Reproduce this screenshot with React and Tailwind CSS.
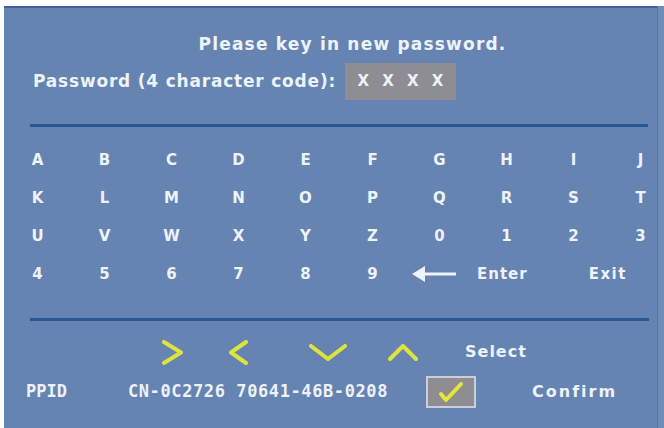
import React from "react";

const keyRows = [
    ["A", "B", "C", "D", "E", "F", "G", "H", "I", "J"],
    ["K", "L", "M", "N", "O", "P", "Q", "R", "S", "T"],
    ["U", "V", "W", "X", "Y", "Z", "0", "1", "2", "3"],
];
const lastRow = ["4", "5", "6", "7", "8", "9"];

const osdFont = { fontFamily: '"DejaVu Sans", Verdana, sans-serif' };
const monoFont = { fontFamily: '"DejaVu Sans Mono", "Liberation Mono", monospace' };

function Chevron({ points, w, h }) {
    return (
        <svg width={w} height={h} viewBox={`0 0 ${w} ${h}`}>
            <polyline points={points} fill="none" stroke="#dfe33e" strokeWidth="4" strokeLinecap="round" strokeLinejoin="round" />
        </svg>
    );
}

function BackArrow() {
    return (
        <svg width="44" height="18" viewBox="0 0 44 18">
            <polygon points="0,9 13,1 13,17" fill="#eef2fa" />
            <rect x="12" y="7.5" width="32" height="3" fill="#eef2fa" />
        </svg>
    );
}

function KeyCell({ children }) {
    return (
        <div className="h-[38px] flex items-center justify-center text-[15px] font-bold text-[#eef2fa]">
            {children}
        </div>
    );
}

export default function App() {
    return (
        <div className="w-[664px] h-[428px] bg-white pt-[6px] pl-[4px] overflow-hidden flex" style={osdFont}>
            <div className="flex-1 h-full bg-[#6584b1] border-t-2 border-[#40629a] flex flex-col text-[#eef2fa] overflow-hidden">
                {/* heading */}
                <div className="mt-[27px] h-[20px] pl-[44px] flex items-center justify-center text-[17px] font-bold tracking-[1.2px]">
                    Please key in new password.
                </div>

                {/* password entry */}
                <div className="mt-[8px] flex items-center h-[37px]">
                    <div className="ml-[29px] w-[312px] text-[17px] font-bold tracking-[0.8px]">
                        Password (4 character code):
                    </div>
                    <div className="w-[111px] h-[37px] bg-[#8d8d93] flex items-center justify-around px-[6px] text-[15px] font-bold">
                        <span>X</span>
                        <span>X</span>
                        <span>X</span>
                        <span>X</span>
                    </div>
                </div>

                <div className="mt-[24px] ml-[26px] w-[618px] h-[3px] bg-[#2a5796]" />

                {/* keyboard */}
                <div className="mt-[14px] grid grid-cols-[repeat(10,67px)]">
                    {keyRows.map((row) =>
                        row.map((k) => <KeyCell key={k}>{k}</KeyCell>)
                    )}
                    {lastRow.map((k) => (
                        <KeyCell key={k}>{k}</KeyCell>
                    ))}
                    <div className="col-span-4 h-[38px] flex items-center">
                        <div className="ml-[6px]">
                            <BackArrow />
                        </div>
                        <span className="ml-[21px] text-[15px] font-bold tracking-[1px]">Enter</span>
                        <span className="ml-[61px] text-[15px] font-bold tracking-[1.5px]">Exit</span>
                    </div>
                </div>

                <div className="mt-[25px] ml-[26px] w-[619px] h-[3px] bg-[#2a5796]" />

                {/* navigation hints */}
                <div className="mt-[16px] h-[30px] flex items-center">
                    <div className="ml-[158px]">
                        <Chevron w={21} h={25} points="2,2 19,12.5 2,23" />
                    </div>
                    <div className="ml-[46px]">
                        <Chevron w={19} h={25} points="17,2 2,12.5 17,23" />
                    </div>
                    <div className="ml-[61px]">
                        <Chevron w={38} h={17} points="2,2 19,15 36,2" />
                    </div>
                    <div className="ml-[41px]">
                        <Chevron w={30} h={17} points="2,15 15,2 28,15" />
                    </div>
                    <span className="ml-[47px] text-[16px] font-bold tracking-[1px]">Select</span>
                </div>

                {/* footer */}
                <div className="mt-[9px] h-[32px] flex items-center">
                    <span className="ml-[22px] text-[17px] font-bold" style={monoFont}>PPID</span>
                    <span className="ml-[61px] text-[17px] font-bold tracking-[0.6px]" style={monoFont}>
                        CN-0C2726 70641-46B-0208
                    </span>
                    <div className="ml-[38px] w-[50px] h-[32px] bg-[#8e8d92] border-2 border-[#c9cfdb] flex items-center justify-center">
                        <svg width="26" height="22" viewBox="0 0 26 22">
                            <polyline points="3,13 8,19 23,3" fill="none" stroke="#e4e63a" strokeWidth="4" strokeLinecap="round" strokeLinejoin="round" />
                        </svg>
                    </div>
                    <span className="ml-[56px] text-[16px] font-bold tracking-[2px]">Confirm</span>
                </div>
            </div>
            <div className="w-[7px] h-full border-l border-[#55759f] bg-[#6d8cb8]" />
        </div>
    );
}
